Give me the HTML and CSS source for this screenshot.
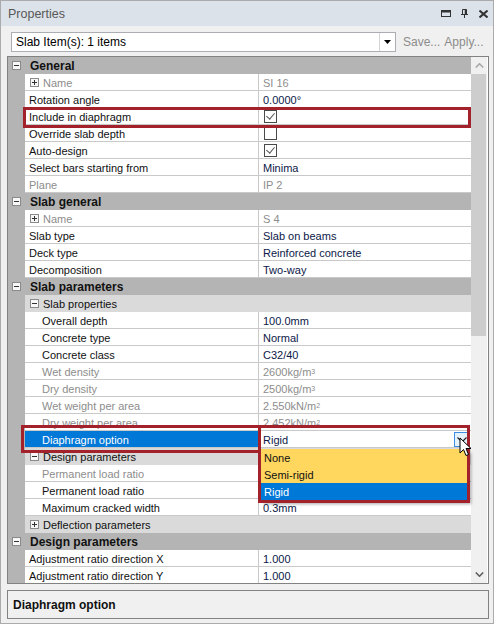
FILE: index.html
```html
<!DOCTYPE html>
<html lang="en">
<head>
  <meta charset="UTF-8">
  <title>Properties</title>
  <link rel="stylesheet" href="styles.css">
</head>
<body>

<div class="window">

  <!-- Panel title bar -->
  <div class="titlebar">
    <span>Properties</span>
    <div class="title-icons">
      <svg class="ic-restore" width="10" height="7" viewBox="0 0 10 7"><rect x="0.5" y="0.5" width="9" height="6" fill="none" stroke="#333"/><rect x="0" y="0" width="10" height="2.5" fill="#333"/></svg>
      <svg class="ic-pin" width="7" height="9" viewBox="0 0 7 9"><path d="M1.5 0.5h4v5h-4z" fill="none" stroke="#333"/><path d="M4.5 0.5v5" stroke="#333" stroke-width="1.5"/><path d="M0 5.5h7" stroke="#333"/><path d="M3.5 5.5v3.5" stroke="#333"/></svg>
      <svg class="ic-close" width="9" height="8" viewBox="0 0 9 8"><path d="M0.5 0.5l8 7M8.5 0.5l-8 7" stroke="#333" stroke-width="2"/></svg>
    </div>
  </div>

  <!-- Selection combo and actions -->
  <div class="toolbar">
    <div class="combo">
      <span>Slab Item(s): 1 items</span>
      <div class="combo-btn"><svg width="7" height="4" viewBox="0 0 7 4"><path d="M0 0h7l-3.5 4z" fill="#000"/></svg></div>
    </div>
    <span class="tool-link">Save...</span>
    <span class="tool-link apply">Apply...</span>
  </div>

  <!-- Property grid -->
  <div class="grid">
    <div class="rows">

      <div class="row cat"><div class="margin"><i class="box minus"></i></div><div class="cat-label">General</div></div>
      <div class="row prop off"><div class="margin"></div><div class="name expander"><i class="box plus"></i>Name</div><div class="value">SI 16</div></div>
      <div class="row prop"><div class="margin"></div><div class="name">Rotation angle</div><div class="value">0.0000°</div></div>
      <div class="row prop"><div class="margin"></div><div class="name">Include in diaphragm</div><div class="value"><span class="check on"></span></div></div>
      <div class="row prop"><div class="margin"></div><div class="name">Override slab depth</div><div class="value"><span class="check"></span></div></div>
      <div class="row prop"><div class="margin"></div><div class="name">Auto-design</div><div class="value"><span class="check on"></span></div></div>
      <div class="row prop"><div class="margin"></div><div class="name">Select bars starting from</div><div class="value">Minima</div></div>
      <div class="row prop off"><div class="margin"></div><div class="name">Plane</div><div class="value">IP 2</div></div>

      <div class="row cat"><div class="margin"><i class="box minus"></i></div><div class="cat-label">Slab general</div></div>
      <div class="row prop off"><div class="margin"></div><div class="name expander"><i class="box plus"></i>Name</div><div class="value">S 4</div></div>
      <div class="row prop"><div class="margin"></div><div class="name">Slab type</div><div class="value">Slab on beams</div></div>
      <div class="row prop"><div class="margin"></div><div class="name">Deck type</div><div class="value">Reinforced concrete</div></div>
      <div class="row prop"><div class="margin"></div><div class="name">Decomposition</div><div class="value">Two-way</div></div>

      <div class="row cat"><div class="margin"><i class="box minus"></i></div><div class="cat-label">Slab parameters</div></div>
      <div class="row sub"><div class="margin"></div><div class="sub-label"><i class="box minus"></i>Slab properties</div></div>
      <div class="row prop child"><div class="margin"></div><div class="name">Overall depth</div><div class="value">100.0mm</div></div>
      <div class="row prop child"><div class="margin"></div><div class="name">Concrete type</div><div class="value">Normal</div></div>
      <div class="row prop child"><div class="margin"></div><div class="name">Concrete class</div><div class="value">C32/40</div></div>
      <div class="row prop child off"><div class="margin"></div><div class="name">Wet density</div><div class="value">2600kg/m<sup>3</sup></div></div>
      <div class="row prop child off"><div class="margin"></div><div class="name">Dry density</div><div class="value">2500kg/m<sup>3</sup></div></div>
      <div class="row prop child off"><div class="margin"></div><div class="name">Wet weight per area</div><div class="value">2.550kN/m<sup>2</sup></div></div>
      <div class="row prop child off"><div class="margin"></div><div class="name">Dry weight per area</div><div class="value">2.452kN/m<sup>2</sup></div></div>
      <div class="row prop child selected"><div class="margin"></div><div class="name">Diaphragm option</div><div class="value">Rigid<span class="drop-btn"><svg width="10" height="6" viewBox="0 0 10 6"><path d="M0.5 0.5l4.5 4.5 4.5-4.5" fill="none" stroke="#222" stroke-width="1.2"/></svg></span></div></div>
      <div class="row sub"><div class="margin"></div><div class="sub-label"><i class="box minus"></i>Design parameters</div></div>
      <div class="row prop child off"><div class="margin"></div><div class="name">Permanent load ratio</div><div class="value"></div></div>
      <div class="row prop child"><div class="margin"></div><div class="name">Permanent load ratio</div><div class="value"></div></div>
      <div class="row prop child"><div class="margin"></div><div class="name">Maximum cracked width</div><div class="value">0.3mm</div></div>
      <div class="row sub"><div class="margin"></div><div class="sub-label"><i class="box plus"></i>Deflection parameters</div></div>

      <div class="row cat"><div class="margin"><i class="box minus"></i></div><div class="cat-label">Design parameters</div></div>
      <div class="row prop"><div class="margin"></div><div class="name">Adjustment ratio direction X</div><div class="value">1.000</div></div>
      <div class="row prop"><div class="margin"></div><div class="name">Adjustment ratio direction Y</div><div class="value">1.000</div></div>

      <!-- open dropdown of the selected row -->
      <ul class="dropdown">
        <li>None</li>
        <li>Semi-rigid</li>
        <li class="picked">Rigid</li>
      </ul>

      <!-- highlight frames -->
      <div class="redbox box-include"></div>
      <div class="redbox box-option"></div>
      <div class="redbox box-list"></div>

      <svg class="cursor" width="13" height="21" viewBox="0 0 13 21"><path d="M1 1v15l3.5-3.5 2.5 6 2.5-1-2.5-6h5z" fill="#fff" stroke="#000" stroke-linejoin="round"/></svg>
    </div>

    <div class="scrollbar">
      <div class="sb-btn"><svg width="9" height="5" viewBox="0 0 9 5"><path d="M0.8 4.5l3.7-3.7 3.7 3.7" fill="none" stroke="#a8a8a8" stroke-width="1.6"/></svg></div>
      <div class="sb-thumb"></div>
      <div class="sb-track"></div>
      <div class="sb-btn"><svg width="9" height="5" viewBox="0 0 9 5"><path d="M0.8 0.5l3.7 3.7 3.7-3.7" fill="none" stroke="#606060" stroke-width="1.6"/></svg></div>
    </div>
  </div>

  <div class="desc">Diaphragm option</div>
</div>

</body>
</html>
```

FILE: styles.css
```css
body {
  margin: 0;
  background: #fff;
  font-family: "Liberation Sans", Arial, sans-serif;
}

.window {
  width: 494px;
  height: 624px;
  box-sizing: border-box;
  border: 1px solid #ababab;
  background: #f0f0f0;
  display: flex;
  flex-direction: column;
}

/* title bar */
.titlebar {
  height: 25px;
  flex: none;
  background: #dce2e9;
  display: flex;
  align-items: center;
  padding: 0 5px 0 7px;
  color: #585858;
  font-size: 12.5px;
}

.title-icons {
  margin-left: auto;
  display: flex;
  align-items: center;
}

.ic-pin { margin-left: 10px; }
.ic-close { margin-left: 11px; }

/* toolbar */
.toolbar {
  height: 30px;
  flex: none;
  box-sizing: border-box;
  display: flex;
  align-items: flex-start;
  padding: 6px 0 0 10px;
}

.combo {
  width: 385px;
  height: 20px;
  box-sizing: border-box;
  border: 1px solid #abadb3;
  background: #fff;
  display: flex;
  align-items: center;
  font-size: 12px;
  color: #000;
}

.combo span {
  padding-left: 4px;
}

.combo-btn {
  margin-left: auto;
  width: 15px;
  height: 100%;
  border-left: 1px solid #d5d5d5;
  display: flex;
  align-items: center;
  justify-content: center;
}

.tool-link {
  font-size: 12px;
  line-height: 20px;
  color: #8c8c8c;
  margin-left: 7px;
}

.tool-link.apply {
  margin-left: 4px;
}

/* property grid */
.grid {
  margin-left: 6px;
  width: 482px;
  height: 528px;
  flex: none;
  box-sizing: border-box;
  border: 1px solid #828282;
  background: #fff;
  display: flex;
  overflow: hidden;
}

.rows {
  position: relative;
  width: 463px;
  flex: none;
}

.row {
  display: flex;
  height: 17px;
  font-size: 11px;
  color: #111;
}

.margin {
  width: 17px;
  flex: none;
  background: #b4b4b4;
  display: flex;
  align-items: center;
  justify-content: center;
}

.box {
  width: 9px;
  height: 9px;
  box-sizing: border-box;
  border: 1px solid #8a8a8a;
  background: #f7f7f7;
  position: relative;
  display: inline-block;
  flex: none;
}

.box::before {
  content: "";
  position: absolute;
  left: 1px;
  top: 3px;
  width: 5px;
  height: 1px;
  background: #333;
}

.box.plus::after {
  content: "";
  position: absolute;
  left: 3px;
  top: 1px;
  width: 1px;
  height: 5px;
  background: #333;
}

.cat {
  background: #b4b4b4;
}

.cat-label {
  font-size: 12px;
  font-weight: bold;
  line-height: 17px;
  padding: 1px 0 0 5px;
  color: #111;
}

.sub-label {
  flex: 1;
  background: #dadada;
  display: flex;
  align-items: center;
  padding-left: 5px;
}

.sub-label .box,
.expander .box {
  margin-right: 4px;
}

.name,
.value {
  box-sizing: border-box;
  border-bottom: 1px solid #c9c9c9;
  display: flex;
  align-items: center;
  white-space: nowrap;
  padding-top: 1px;
}

.name {
  width: 234px;
  flex: none;
  border-right: 1px solid #c9c9c9;
  padding-left: 4px;
}

.expander {
  padding-left: 5px;
}

.child .name {
  padding-left: 17px;
}

.value {
  width: 212px;
  flex: none;
  padding-left: 4px;
  color: #0c1848;
}

.value sup {
  font-size: 7px;
  line-height: 0;
  vertical-align: 4px;
}

.off .name,
.off .value {
  color: #8d8d8d;
}

.selected .name {
  background: #0078d7;
  color: #fff;
}

.check {
  width: 13px;
  height: 13px;
  box-sizing: border-box;
  border: 1px solid #4a4a4a;
  position: relative;
  margin-left: 1px;
}

.check.on::after {
  content: "";
  position: absolute;
  left: 3px;
  top: 0px;
  width: 4px;
  height: 7px;
  border-right: 1px solid #555;
  border-bottom: 1px solid #555;
  transform: rotate(40deg);
}

.drop-btn {
  margin-left: auto;
  margin-right: 1px;
  width: 16px;
  height: 15px;
  box-sizing: border-box;
  border: 1px solid #3d8ee0;
  background: #e5f1fb;
  display: flex;
  align-items: center;
  justify-content: center;
}

/* open list */
.dropdown {
  position: absolute;
  left: 252px;
  top: 392px;
  width: 207px;
  margin: 0;
  padding: 0;
  list-style: none;
  background: #ffd75f;
  font-size: 11px;
  color: #111;
  box-shadow: 4px 4px 3px rgba(0, 0, 0, 0.35);
}

.dropdown li {
  height: 17px;
  line-height: 17px;
  padding: 1px 0 0 4px;
  box-sizing: border-box;
}

.dropdown li.picked {
  background: #0078d7;
  color: #fff;
}

.redbox {
  position: absolute;
  box-sizing: border-box;
  border: 3px solid #a3212b;
}

.box-include { left: 15px; top: 50px; width: 448px; height: 21px; }
.box-option { left: 13px; top: 368px; width: 240px; height: 28px; }
.box-list { left: 250px; top: 368px; width: 212px; height: 78px; }

.cursor {
  position: absolute;
  left: 451px;
  top: 380px;
}

/* scrollbar */
.scrollbar {
  width: 16px;
  flex: none;
  background: #f0f0f0;
  display: flex;
  flex-direction: column;
}

.sb-btn {
  height: 17px;
  flex: none;
  display: flex;
  align-items: center;
  justify-content: center;
}

.sb-thumb {
  height: 262px;
  flex: none;
  margin-right: 1px;
  background: #cdcdcd;
}

.sb-track {
  flex: 1;
}

/* description pane */
.desc {
  margin: 6px 0 0 6px;
  width: 482px;
  height: 29px;
  flex: none;
  box-sizing: border-box;
  border: 1px solid #828282;
  padding-left: 5px;
  display: flex;
  align-items: center;
  font-size: 12px;
  font-weight: bold;
  color: #111;
}
```
